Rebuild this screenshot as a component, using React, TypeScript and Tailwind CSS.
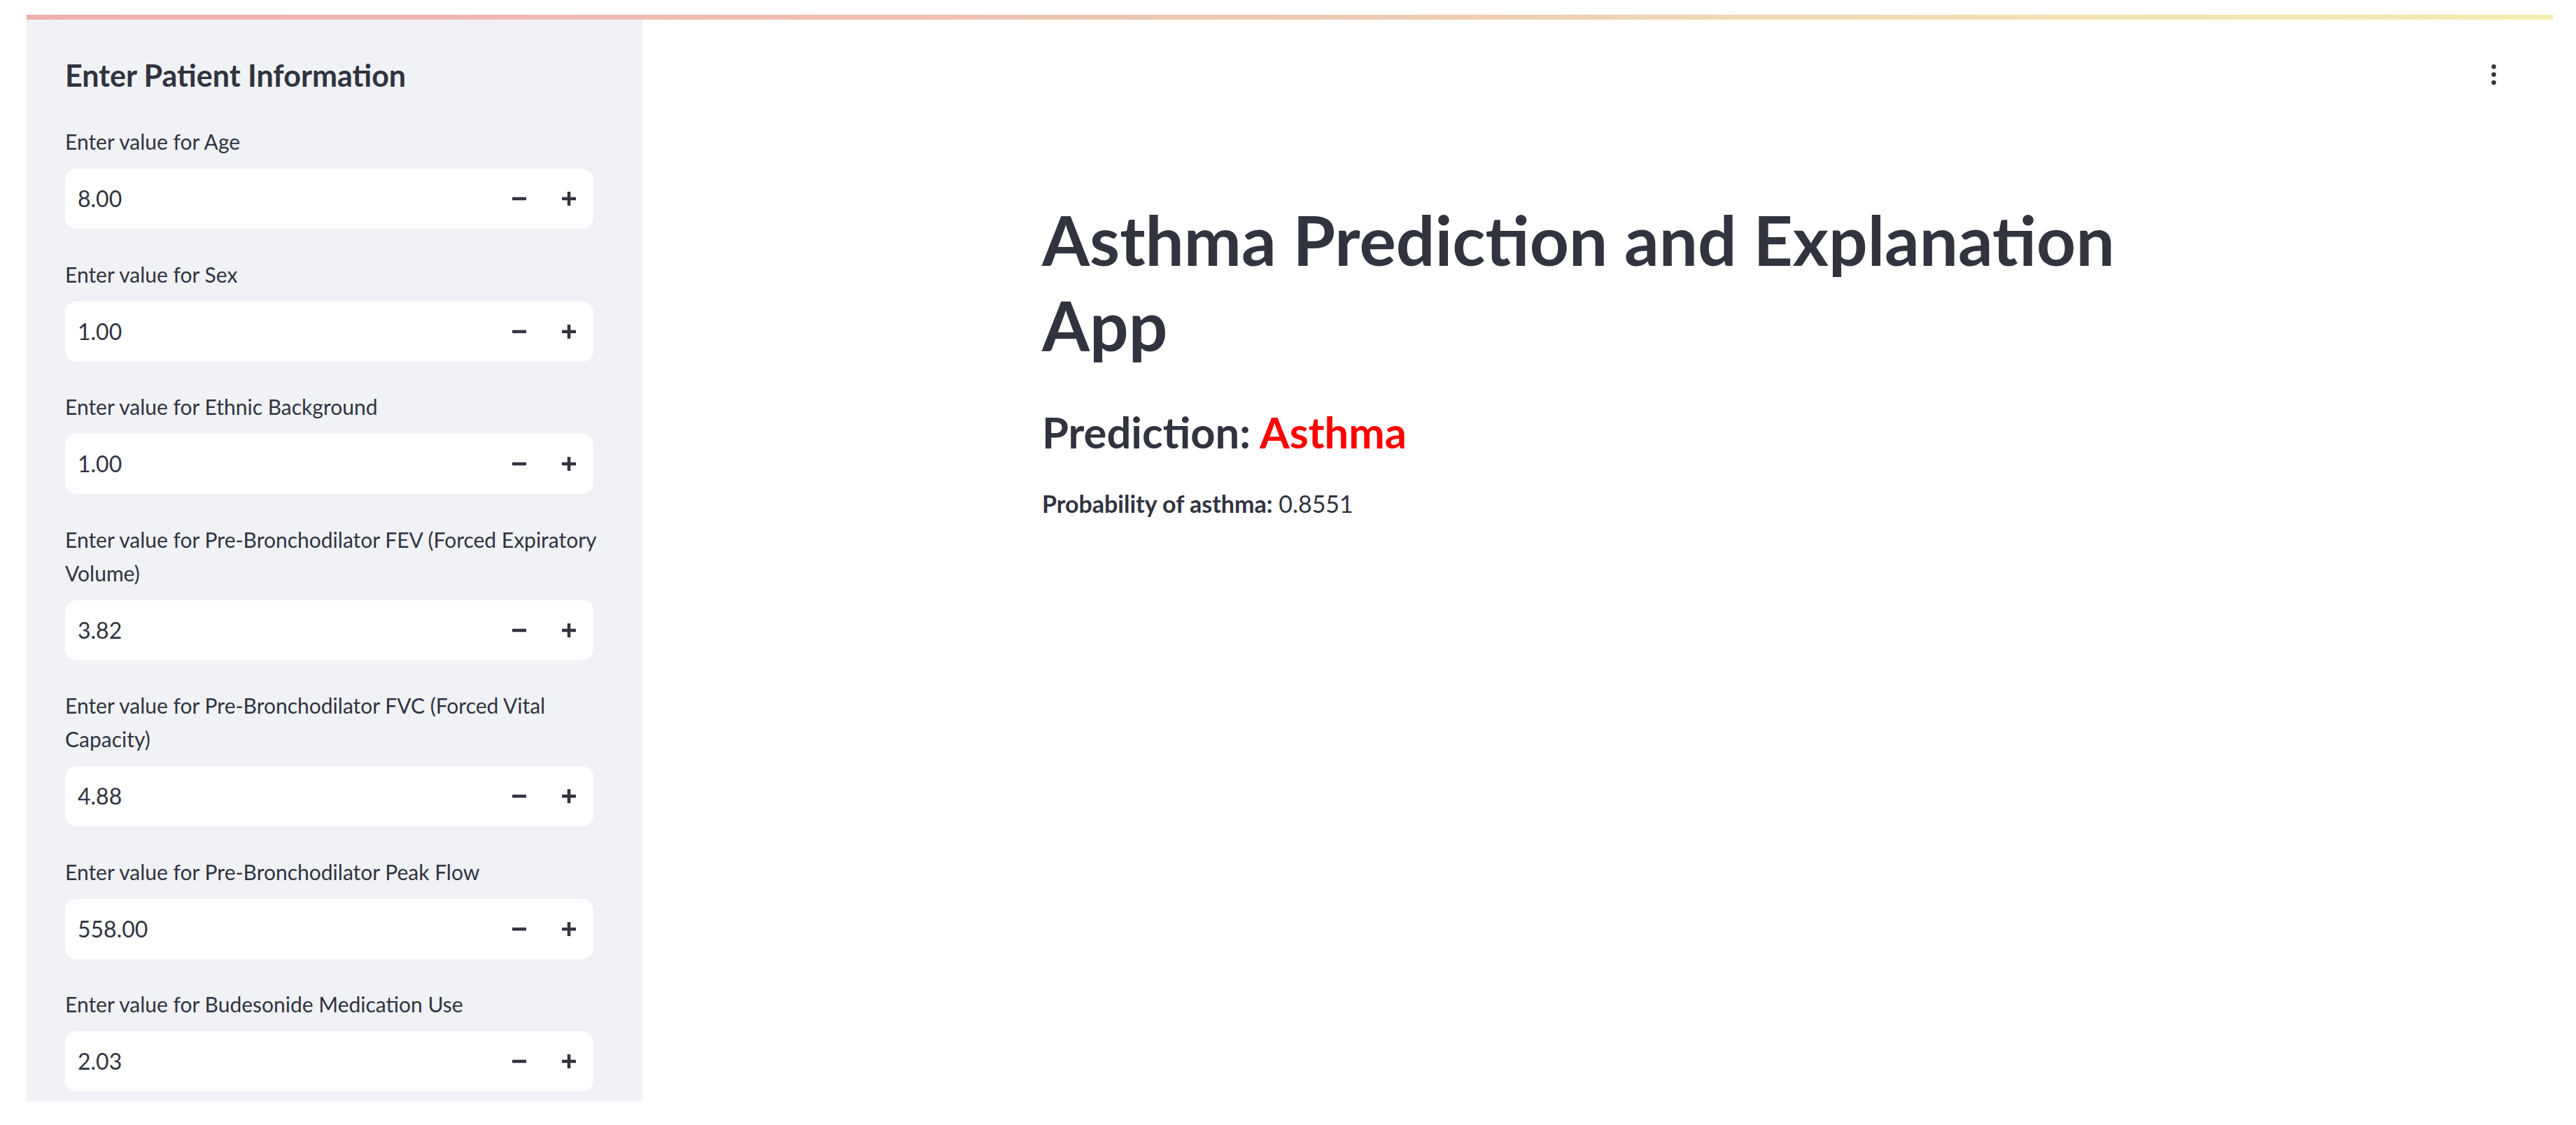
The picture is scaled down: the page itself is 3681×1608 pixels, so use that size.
import React from "react";
import { EllipsisVertical } from "lucide-react";

const fields: { label: string[]; value: string }[] = [
  { label: ["Enter value for Age"], value: "8.00" },
  { label: ["Enter value for Sex"], value: "1.00" },
  { label: ["Enter value for Ethnic Background"], value: "1.00" },
  {
    label: ["Enter value for Pre-Bronchodilator FEV (Forced Expiratory", "Volume)"],
    value: "3.82",
  },
  {
    label: ["Enter value for Pre-Bronchodilator FVC (Forced Vital", "Capacity)"],
    value: "4.88",
  },
  { label: ["Enter value for Pre-Bronchodilator Peak Flow"], value: "558.00" },
  { label: ["Enter value for Budesonide Medication Use"], value: "2.03" },
];

function MinusIcon() {
  return (
    <svg width="20" height="20" viewBox="0 0 20 20" aria-hidden="true">
      <rect x="0" y="7.75" width="20" height="4.5" rx="0.5" fill="#31333f" />
    </svg>
  );
}

function PlusIcon() {
  return (
    <svg width="20" height="20" viewBox="0 0 20 20" aria-hidden="true">
      <rect x="0" y="7.75" width="20" height="4.5" rx="0.5" fill="#31333f" />
      <rect x="7.75" y="0" width="4.5" height="20" rx="0.5" fill="#31333f" />
    </svg>
  );
}

function NumberField({ label, value }: { label: string[]; value: string }) {
  return (
    <div className="flex flex-col">
      <div className="mb-[15px] text-[30px] leading-[48px] text-[#31333f]">
        {label.map((l, i) => (
          <div key={i} className="whitespace-nowrap">
            {l}
          </div>
        ))}
      </div>
      <div className="flex h-[86px] w-[755px] items-center rounded-[16px] bg-white">
        <div className="flex-1 pl-[18px] text-[32px] text-[#31333f]">{value}</div>
        <button className="flex h-full w-[71px] items-center justify-center">
          <MinusIcon />
        </button>
        <button className="flex h-full w-[71px] items-center justify-center">
          <PlusIcon />
        </button>
      </div>
    </div>
  );
}

export default function App() {
  return (
    <div
      className="min-h-[1608px] w-full bg-white pt-[21px] pl-[38px] pr-[33px]"
      style={{ fontFamily: "Lato, 'Open Sans', 'Noto Sans', sans-serif" }}
    >
      <div className="h-[7px] w-full bg-linear-to-r from-[#eeaeae] via-[#efc9b2] to-[#f3eeb0]" />
      <div className="flex">
        <aside className="h-[1546px] w-[880px] shrink-0 overflow-hidden bg-[#f0f2f6] pt-[54px] pl-[55px] pr-[70px]">
          <h2 className="mb-[44px] whitespace-nowrap text-[43px] font-bold leading-[52px] text-[#31333f]">
            Enter Patient Information
          </h2>
          <div className="flex flex-col gap-[40.5px]">
            {fields.map((f, i) => (
              <NumberField key={i} label={f.label} value={f.value} />
            ))}
          </div>
        </aside>
        <main className="relative flex-1 pt-[253px] pl-[571px]">
          <button className="absolute right-[65px] top-[59px] text-[#31333f]">
            <EllipsisVertical size={39} strokeWidth={2} />
          </button>
          <h1 className="whitespace-nowrap text-[98px] font-bold leading-[122px] text-[#31333f]">
            Asthma Prediction and Explanation
            <br />
            App
          </h1>
          <h3 className="mt-[56px] whitespace-nowrap text-[61.5px] font-bold leading-[1.2] text-[#31333f]">
            Prediction: <span className="text-[#ff0000]">Asthma</span>
          </h3>
          <p className="mt-[45px] whitespace-nowrap text-[34px] leading-[1.2] text-[#31333f]">
            <span className="font-bold">Probability of asthma:</span> 0.8551
          </p>
        </main>
      </div>
    </div>
  );
}
